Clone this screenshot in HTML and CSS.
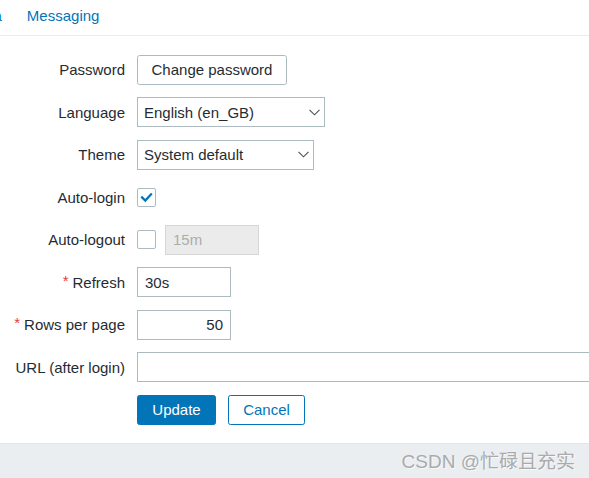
FILE: index.html
```html
<!DOCTYPE html>
<html lang="en">
<head>
<meta charset="utf-8">
<title>User profile</title>
<link rel="stylesheet" href="styles.css">
</head>
<body>
<div class="tabs">
  <span class="tab tab-media">Media</span>
  <span class="tab">Messaging</span>
</div>
<form class="form">
  <label class="label">Password</label>
  <div class="field"><button type="button" class="btn-grey">Change password</button></div>

  <label class="label">Language</label>
  <div class="field">
    <div class="select sel-lang"><span>English (en_GB)</span>
      <svg class="chev" width="11" height="7" viewBox="0 0 11 7"><path d="M0.5 0.8 L5.5 5.8 L10.5 0.8" fill="none" stroke="#4a5258" stroke-width="1.1"/></svg>
    </div>
  </div>

  <label class="label">Theme</label>
  <div class="field">
    <div class="select sel-theme"><span>System default</span>
      <svg class="chev" width="11" height="7" viewBox="0 0 11 7"><path d="M0.5 0.8 L5.5 5.8 L10.5 0.8" fill="none" stroke="#4a5258" stroke-width="1.1"/></svg>
    </div>
  </div>

  <label class="label">Auto-login</label>
  <div class="field">
    <span class="checkbox">
      <svg width="19" height="19" viewBox="0 0 19 19"><path d="M4.3 8.6 L8.3 12.6 L14.8 5.6" fill="none" stroke="#0275b8" stroke-width="2.2"/></svg>
    </span>
  </div>

  <label class="label">Auto-logout</label>
  <div class="field">
    <span class="checkbox"></span>
    <div class="input input-disabled w94">15m</div>
  </div>

  <label class="label"><span class="ast">*</span> Refresh</label>
  <div class="field"><div class="input w94">30s</div></div>

  <label class="label"><span class="ast">*</span> Rows per page</label>
  <div class="field"><div class="input w94 right">50</div></div>

  <label class="label">URL (after login)</label>
  <div class="field"><div class="input w-url"></div></div>

  <span></span>
  <div class="field buttons">
    <button type="button" class="btn-primary">Update</button>
    <button type="button" class="btn-alt">Cancel</button>
  </div>
</form>
<div class="footer">
  <span class="watermark">CSDN @忙碌且充实</span>
</div>
</body>
</html>
```

FILE: styles.css
```css
html, body {
  margin: 0;
  padding: 0;
  background: #ffffff;
  overflow: hidden;
}
body {
  font-family: "Liberation Sans", Arial, sans-serif;
  font-size: 15px;
  color: #1f2c33;
  width: 589px;
  height: 478px;
}
.tabs {
  border-bottom: 1px solid #ebeef0;
  display: flex;
  align-items: center;
  gap: 25px;
  margin-left: -39px;
  box-sizing: border-box;
  height: 36px;
  padding-bottom: 4px;
}
.tab {
  color: #0275b8;
  font-size: 15px;
  white-space: nowrap;
}
.form {
  display: grid;
  grid-template-columns: 125px 1fr;
  grid-auto-rows: 30px;
  column-gap: 12px;
  row-gap: 12.5px;
  padding-top: 18.5px;
  margin: 0;
}
.label {
  display: flex;
  align-items: center;
  justify-content: flex-end;
  white-space: nowrap;
  font-size: 15px;
  color: #1f2c33;
}
.ast {
  color: #e0403c;
  margin-right: 4px;
  font-size: 15px;
  position: relative;
  top: -2px;
}
.field {
  display: flex;
  align-items: center;
  gap: 9px;
  min-width: 0;
}
button {
  font-family: "Liberation Sans", Arial, sans-serif;
  font-size: 15px;
  height: 30px;
  box-sizing: border-box;
  border-radius: 2.5px;
  padding: 0;
  cursor: pointer;
}
.btn-grey {
  width: 150px;
  background: #ffffff;
  border: 1px solid #acbbc2;
  color: #1f2c33;
}
.btn-primary {
  width: 79px;
  background: #0275b8;
  border: 1px solid #0275b8;
  color: #ffffff;
}
.btn-alt {
  width: 77px;
  background: #ffffff;
  border: 1px solid #0275b8;
  color: #0275b8;
}
.buttons {
  gap: 12px;
}
.select, .input {
  height: 30px;
  box-sizing: border-box;
  border: 1px solid #acbbc2;
  background: #ffffff;
  display: flex;
  align-items: center;
  padding: 0 6px;
  white-space: nowrap;
  font-size: 15px;
  color: #1f2c33;
}
.select {
  justify-content: space-between;
  padding-right: 4px;
}
.sel-lang { width: 188px; }
.sel-theme { width: 177px; }
.chev { display: block; }
.input { padding: 0 7px; }
.w94 { width: 94px; }
.w-url { width: 470px; flex-shrink: 0; }
.right { justify-content: flex-end; }
.input-disabled {
  background: #ebebeb;
  border-color: #d6d6d6;
  color: #acacac;
}
.checkbox {
  width: 19px;
  height: 19px;
  box-sizing: border-box;
  border: 1px solid #acbbc2;
  border-radius: 2px;
  background: #ffffff;
  position: relative;
  flex-shrink: 0;
}
.checkbox svg {
  position: absolute;
  left: -1px;
  top: -1px;
}
.footer {
  margin-top: 18px;
  height: 35px;
  background: #ebeef0;
  border-top: 1px solid #e3e6e8;
  box-sizing: border-box;
  display: flex;
  align-items: center;
  justify-content: flex-end;
  padding-right: 14px;
  padding-bottom: 3px;
}
.watermark {
  font-family: "Liberation Sans", "Noto Sans CJK SC", sans-serif;
  font-size: 19px;
  color: #a9abad;
  text-shadow: 1px 1px 0 #f8f8f8;
  white-space: nowrap;
}
```
